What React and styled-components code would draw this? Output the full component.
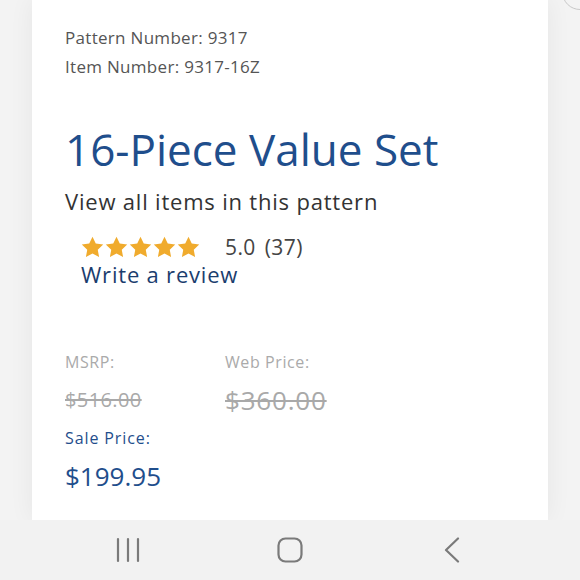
import React from "react";
import styled, { createGlobalStyle } from "styled-components";

const GlobalStyle = createGlobalStyle`
  html, body {
    margin: 0;
    padding: 0;
    background: #f2f2f2;
  }
  body {
    font-family: "Open Sans", "Liberation Sans", sans-serif;
  }
`;

const Screen = styled.div`
  width: 580px;
  height: 580px;
  display: flex;
  flex-direction: column;
  overflow: hidden;
  position: relative;
  background: #f3f3f3;
`;

const Main = styled.div`
  flex: 1;
  padding: 0 32px;
  display: flex;
`;

const Card = styled.div`
  flex: 1;
  background: #fff;
  box-shadow: 0 0 24px rgba(0, 0, 0, 0.06);
  padding: 23px 0 0 33px;
`;

const Meta = styled.div`
  font-size: 17px;
  line-height: 29px;
  letter-spacing: 0.3px;
  color: #555;
`;

const Title = styled.h1`
  margin: 40px 0 0;
  font-size: 44px;
  font-weight: 400;
  line-height: 56px;
  color: #1f4e8c;
  letter-spacing: 0;
`;

const PatternLink = styled.div`
  margin-top: 9px;
  font-size: 22px;
  line-height: 30px;
  letter-spacing: 0.8px;
  color: #333;
`;

const Rating = styled.div`
  margin: 17px 0 0 16px;
`;

const StarRow = styled.div`
  display: flex;
  align-items: center;
  height: 28px;
`;

const Stars = styled.div`
  display: flex;
  gap: 1px;
  margin-right: 25px;
`;

const Score = styled.span`
  font-size: 21px;
  letter-spacing: 0.4px;
  color: #444;
  & > span {
    margin-left: 9px;
  }
`;

const ReviewLink = styled.a`
  display: block;
  font-size: 22px;
  line-height: 26px;
  letter-spacing: 0.8px;
  color: #1b3d6e;
  text-decoration: none;
`;

const Prices = styled.div`
  margin-top: 63px;
  display: grid;
  grid-template-columns: 160px auto;
`;

const PriceBlock = styled.div`
  display: flex;
  flex-direction: column;
`;

const Label = styled.span`
  font-size: 16px;
  line-height: 24px;
  letter-spacing: ${(p) => (p.$sale ? "0.9px" : "0.6px")};
  color: ${(p) => (p.$sale ? "#1f4e8c" : "#aaa")};
`;

const Amount = styled.span`
  margin-top: 9px;
  font-size: ${(p) => p.$size}px;
  line-height: 34px;
  letter-spacing: ${(p) => p.$spacing || 0}px;
  color: ${(p) => (p.$sale ? "#1f4e8c" : "#a9a9a9")};
  text-decoration: ${(p) => (p.$sale ? "none" : "line-through")};
  text-decoration-thickness: 1.5px;
`;

const SaleBlock = styled(PriceBlock)`
  margin-top: 9px;
`;

const NavBar = styled.div`
  height: 60px;
  background: #f2f2f2;
  display: grid;
  grid-template-columns: repeat(3, 162px);
  align-items: center;
  justify-items: center;
  padding-left: 47px;
`;

const Corner = styled.div`
  position: absolute;
  right: -18px;
  top: -26px;
  width: 34px;
  height: 34px;
  border-radius: 50%;
  border: 1.5px solid #c8c8c8;
`;

const Star = () => (
  <svg width="23" height="22" viewBox="0 0 24 23">
    <path
      d="M12 0.8l3.4 7.1 7.8 1-5.7 5.4 1.4 7.7L12 18.3 5.1 22l1.4-7.7L0.8 8.9l7.8-1z"
      fill="#f0ab2d"
    />
  </svg>
);

const NavIcon = ({ kind }) => (
  <svg width="26" height="26" viewBox="0 0 26 26" fill="none" stroke="#7a7a7a" strokeWidth="2.2" strokeLinecap="round" strokeLinejoin="round">
    {kind === "recent" && (
      <>
        <path d="M3 2v22" />
        <path d="M13 2v22" />
        <path d="M23 2v22" />
      </>
    )}
    {kind === "home" && <rect x="1.5" y="1.5" width="23" height="23" rx="7" />}
    {kind === "back" && <path d="M19 1.5L7 13l12 11.5" />}
  </svg>
);

export default function App() {
  return (
    <Screen>
      <GlobalStyle />
      <Corner />
      <Main>
        <Card>
          <Meta>
            Pattern Number: 9317
            <br />
            Item Number: 9317-16Z
          </Meta>
          <Title>16-Piece Value Set</Title>
          <PatternLink>View all items in this pattern</PatternLink>
          <Rating>
            <StarRow>
              <Stars>
                {[0, 1, 2, 3, 4].map((i) => (
                  <Star key={i} />
                ))}
              </Stars>
              <Score>
                5.0<span>(37)</span>
              </Score>
            </StarRow>
            <ReviewLink href="#">Write a review</ReviewLink>
          </Rating>
          <Prices>
            <PriceBlock>
              <Label>MSRP:</Label>
              <Amount $size={20} $spacing={0.4}>$516.00</Amount>
            </PriceBlock>
            <PriceBlock>
              <Label>Web Price:</Label>
              <Amount $size={26} $spacing={0.8}>$360.00</Amount>
            </PriceBlock>
          </Prices>
          <SaleBlock>
            <Label $sale>Sale Price:</Label>
            <Amount $sale $size={26}>$199.95</Amount>
          </SaleBlock>
        </Card>
      </Main>
      <NavBar>
        <NavIcon kind="recent" />
        <NavIcon kind="home" />
        <NavIcon kind="back" />
      </NavBar>
    </Screen>
  );
}
